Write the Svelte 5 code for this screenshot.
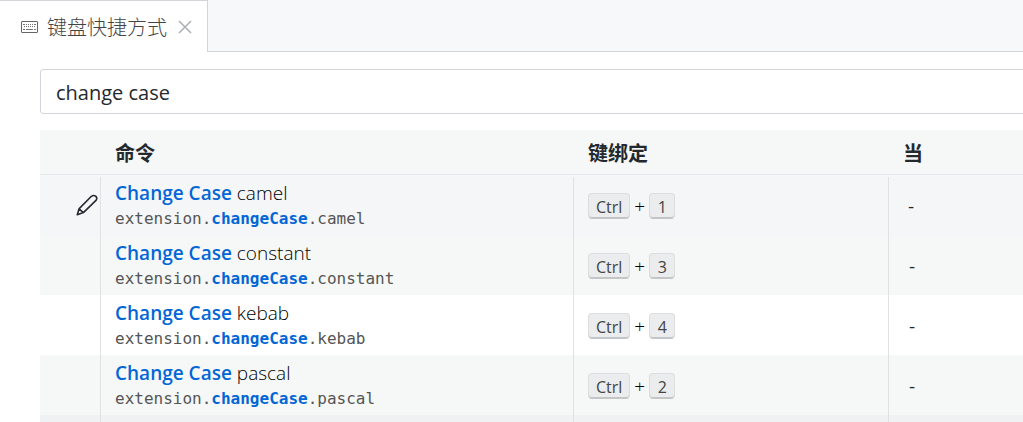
<script>
  const rows = [
    { name: 'camel', key: '1' },
    { name: 'constant', key: '3' },
    { name: 'kebab', key: '4' },
    { name: 'pascal', key: '2' }
  ];
  let query = $state('change case');
</script>

<div class="window">
  <header class="tabs">
    <div class="tab">
      <svg class="keyboard" viewBox="0 0 17 12" width="17" height="12" aria-hidden="true">
        <rect x="0.5" y="0.5" width="16" height="11" rx="0.5" fill="none" stroke="#666" />
        <path d="M2 3.5h2M5 3.5h1M7 3.5h1M9 3.5h1M11 3.5h1M13 3.5h2M3 5.5h1M5 5.5h1M7 5.5h1M9 5.5h1M11 5.5h1M13 5.5h1M2 8.5h2M5 8.5h7M13 8.5h2" stroke="#777" fill="none" />
      </svg>
      <span class="title">键盘快捷方式</span>
      <button class="close" aria-label="关闭">
        <svg viewBox="0 0 14 14" width="14" height="14" aria-hidden="true">
          <path d="M1 1l12 12M13 1L1 13" fill="none" stroke="#abaeb3" stroke-width="1.5" />
        </svg>
      </button>
    </div>
    <div class="rest"></div>
  </header>

  <main>
    <input class="search" type="text" aria-label="搜索键绑定" bind:value={query} />
    <table>
      <colgroup>
        <col class="c-edit" /><col class="c-command" /><col class="c-key" /><col />
      </colgroup>
      <thead>
        <tr><th></th><th>命令</th><th>键绑定</th><th>当</th></tr>
      </thead>
      <tbody>
        {#each rows as row, i}
          <tr class:active={i === 0}>
            <td class="edit">
              {#if i === 0}
                <button aria-label="更改键绑定">
                  <svg viewBox="0 0 22 22" width="22" height="22" aria-hidden="true">
                    <path d="M1.3 20.7L3 14.9L15.4 2.3Q17.6 0.7 19.6 2.1Q21.6 3.9 20.2 6.1L7.4 18.6ZM3 14.9L7.4 18.6" fill="none" stroke="#24292e" stroke-width="1.6" stroke-linejoin="round" />
                  </svg>
                </button>
              {/if}
            </td>
            <td>
              <div class="label"><b>Change Case</b> {row.name}</div>
              <div class="id">extension.<b>changeCase</b>.{row.name}</div>
            </td>
            <td>
              <div class="keys"><kbd>Ctrl</kbd><span>+</span><kbd>{row.key}</kbd></div>
            </td>
            <td class="when">-</td>
          </tr>
        {/each}
        <tr class="next"><td class="edit"></td><td></td><td></td><td></td></tr>
      </tbody>
    </table>
  </main>
</div>

<style>
  :global(body) {
    overflow: hidden;
    background: #fff;
  }
  .window {
    height: 100vh;
    overflow: hidden;
    color: #24292e;
    font-family: "Open Sans", "Noto Sans CJK SC", sans-serif;
    font-size: 19px;
  }
  button {
    border: 0;
    padding: 0;
    background: none;
    display: flex;
  }
  .tabs {
    display: flex;
    height: 52px;
  }
  .tab {
    box-sizing: border-box;
    display: flex;
    align-items: center;
    padding: 0 15px 0 21px;
    border-top: 1px solid #d1d5da;
    border-right: 1px solid #d1d5da;
  }
  .title {
    margin: 0 11px 0 9px;
    color: #444;
    font-family: "Noto Sans CJK SC", sans-serif;
    font-size: 20px;
    font-weight: 300;
    line-height: 28px;
    white-space: nowrap;
  }
  .rest {
    flex: 1;
    background: #f6f8fa;
    border-bottom: 1px solid #d1d5da;
  }
  main {
    padding: 17px 0 0 40px;
  }
  .search {
    display: block;
    box-sizing: border-box;
    width: calc(100% + 8px);
    height: 45px;
    padding: 2px 15px 0;
    border: 1px solid #d1d5da;
    border-radius: 3px;
    background: #fff;
    color: #24292e;
    font: inherit;
    font-size: 20px;
    outline: none;
  }
  table {
    width: 100%;
    margin-top: 16px;
    table-layout: fixed;
    border-collapse: separate;
    border-spacing: 0;
  }
  .c-edit { width: 60px; }
  .c-command { width: 473px; }
  .c-key { width: 315px; }
  th {
    box-sizing: border-box;
    height: 45px;
    padding: 2px 15px 0;
    background: #f6f8f7;
    border-bottom: 1px solid #e5e7eb;
    font-family: "Noto Sans CJK SC", sans-serif;
    font-size: 20px;
    line-height: 28px;
    text-align: left;
  }
  td {
    box-sizing: border-box;
    height: 60px;
    padding: 1px 0 0 14px;
    border-left: 1px solid #dfe1e3;
  }
  .active td {
    border-left: 0;
    padding-left: 15px;
    background: linear-gradient(#dfe1e3, #dfe1e3) no-repeat 0 2px / 1px 100%;
  }
  td.edit,
  .active td.edit {
    border-left: 0;
    padding: 0 2px 0 0;
    background: none;
  }
  .edit button {
    margin-left: auto;
  }
  tr.active { background: #f5f6f8; }
  tr:nth-child(even) { background: #f6f8f7; }
  tr.next { background: #f0f1f2; }
  .label {
    color: #000;
    font-weight: 350;
    line-height: 26px;
    white-space: nowrap;
  }
  b { color: #0366d6; }
  .label b { font-weight: 600; }
  .id {
    color: #555;
    font-family: "DejaVu Sans Mono", monospace;
    font-size: 16px;
    line-height: 26px;
    white-space: nowrap;
  }
  .keys {
    display: flex;
    align-items: center;
    gap: 4px;
    font-size: 16px;
  }
  .keys span {
    color: #000;
    font-size: 19px;
    font-weight: 350;
    line-height: 28px;
  }
  kbd {
    box-sizing: border-box;
    min-width: 26px;
    height: 26px;
    padding: 0 7px;
    border: 1px solid #dcdddf;
    border-bottom-color: #c4c5c7;
    border-radius: 4px;
    box-shadow: inset 0 -1px 0 #c4c5c7;
    background: #ebeced;
    color: #444;
    font: inherit;
    line-height: 26px;
    text-align: center;
  }
  td.when,
  .active td.when { padding-left: 20px; }
</style>
